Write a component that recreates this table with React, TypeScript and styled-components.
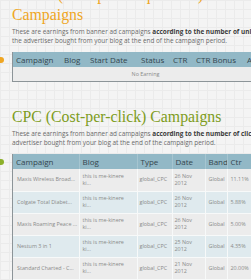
import React from "react";
import styled, { createGlobalStyle } from "styled-components";

const GlobalStyle = createGlobalStyle`
  *, *::before, *::after {
    box-sizing: border-box;
  }

  html, body {
    margin: 0;
    overflow: hidden;
    background-color: #f4f4f4;
    background-image:
      linear-gradient(#ebebeb 1px, transparent 1px),
      linear-gradient(90deg, #ebebeb 1px, transparent 1px);
    background-size: 9px 9px;
    font-family: "Open Sans", "Liberation Sans", sans-serif;
  }
`;

const Page = styled.main`
  width: 330px;
  margin-top: -15px;
  padding-left: 12px;
`;

const Section = styled.section`
  & + & {
    margin-top: 25px;
  }
`;

const Heading = styled.h2<{ $tone: string }>`
  margin: 0;
  width: 240px;
  font-family: "Liberation Serif", serif;
  font-weight: normal;
  font-size: 15.8px;
  line-height: 20px;
  color: ${(p) => p.$tone};
`;

const Intro = styled.p`
  margin: 2px 0 0;
  font-size: 6.4px;
  line-height: 9px;
  color: #6a6a6a;
  white-space: nowrap;

  b {
    color: #3c3c3c;
    font-weight: 700;
  }
`;

const Panel = styled.div<{ $dot: string }>`
  position: relative;
  margin-top: 7px;
  width: 266px;
  border-left: 1px solid #8c9498;
  border-bottom: 1px solid #8c9498;

  &::before {
    content: "";
    position: absolute;
    left: -15px;
    top: 5px;
    width: 6px;
    height: 6px;
    border-radius: 50%;
    background: ${(p) => p.$dot};
  }
`;

const Table = styled.table`
  width: 100%;
  table-layout: fixed;
  border-collapse: collapse;
`;

const HeadCell = styled.th<{ $w?: number; $ruled?: boolean }>`
  width: ${(p) => (p.$w ? `${p.$w}px` : "auto")};
  height: 15px;
  padding: 0 0 0 3px;
  background: #92b8c6;
  color: #34464e;
  font-size: 8px;
  font-weight: normal;
  text-align: left;
  white-space: nowrap;
  overflow: hidden;
  border-right: ${(p) => (p.$ruled ? "1px solid #a6c5d0" : "none")};
`;

const Row = styled.tr<{ $tinted?: boolean }>`
  height: 22px;
  background: ${(p) => (p.$tinted ? "#dfeaee" : "#ececec")};
`;

const Cell = styled.td<{ $pad?: number }>`
  padding: 0 0 0 ${(p) => p.$pad ?? 3}px;
  border-right: 1px solid #f7f9f9;
  border-bottom: 1px solid #f7f9f9;
  font-size: 5.4px;
  line-height: 7px;
  color: #8a8a8a;
  white-space: nowrap;
  overflow: hidden;
  vertical-align: middle;
`;

const Wrap = styled.span`
  display: block;
`;

const EmptyCell = styled.td`
  height: 14px;
  padding: 0;
  background: #ececec;
  font-size: 5.4px;
  color: #8a8a8a;
  text-align: center;
`;

const cpuvColumns: [string, number?][] = [
  ["Campaign", 48],
  ["Blog", 26],
  ["Start Date", 51],
  ["Status", 32],
  ["CTR", 23],
  ["CTR Bonus", 51],
  ["Amount"],
];

const cpcColumns: [string, number?][] = [
  ["Campaign", 66],
  ["Blog", 58],
  ["Type", 35],
  ["Date", 33],
  ["Band", 22],
  ["Ctr"],
];

const cpcRows = [
  { name: "Maxis Wireless Broad...", date: "26 Nov", ctr: "11.11%" },
  { name: "Colgate Total Diabet...", date: "26 Nov", ctr: "5.88%" },
  { name: "Maxis Roaming Peace ...", date: "26 Nov", ctr: "5.00%" },
  { name: "Nestum 3 in 1", date: "25 Nov", ctr: "4.35%" },
  { name: "Standard Charted - C...", date: "21 Nov", ctr: "20.00%" },
];

export default function App() {
  return (
    <>
      <GlobalStyle />
      <Page>
        <Section>
          <Heading $tone="#efa623">CPUV (Cost-per-unique-visit) Campaigns</Heading>
          <Intro>
            These are earnings from banner ad campaigns <b>according to the number of unique visits that</b>
            <br />
            the advertiser bought from your blog at the end of the campaign period.
          </Intro>
          <Panel $dot="#efa623">
            <Table>
              <thead>
                <tr>
                  {cpuvColumns.map(([label, w]) => (
                    <HeadCell key={label} $w={w}>
                      {label}
                    </HeadCell>
                  ))}
                </tr>
              </thead>
              <tbody>
                <tr>
                  <EmptyCell colSpan={7}>No Earning</EmptyCell>
                </tr>
              </tbody>
            </Table>
          </Panel>
        </Section>

        <Section>
          <Heading $tone="#7d9c20">CPC (Cost-per-click) Campaigns</Heading>
          <Intro>
            These are earnings from banner ad campaigns <b>according to the number of clicks that the</b>
            <br />
            advertiser bought from your blog at the end of the campaign period.
          </Intro>
          <Panel $dot="#8cb02a">
            <Table>
              <thead>
                <tr>
                  {cpcColumns.map(([label, w]) => (
                    <HeadCell key={label} $w={w} $ruled>
                      {label}
                    </HeadCell>
                  ))}
                </tr>
              </thead>
              <tbody>
                {cpcRows.map((r, i) => (
                  <Row key={r.name} $tinted={i % 2 === 1}>
                    <Cell $pad={4}>{r.name}</Cell>
                    <Cell>
                      <Wrap>this is me-kinere</Wrap>
                      <Wrap>ki...</Wrap>
                    </Cell>
                    <Cell $pad={2}>global_CPC</Cell>
                    <Cell $pad={2}>
                      <Wrap>{r.date}</Wrap>
                      <Wrap>2012</Wrap>
                    </Cell>
                    <Cell $pad={3}>Global</Cell>
                    <Cell $pad={3}>{r.ctr}</Cell>
                  </Row>
                ))}
              </tbody>
            </Table>
          </Panel>
        </Section>
      </Page>
    </>
  );
}
